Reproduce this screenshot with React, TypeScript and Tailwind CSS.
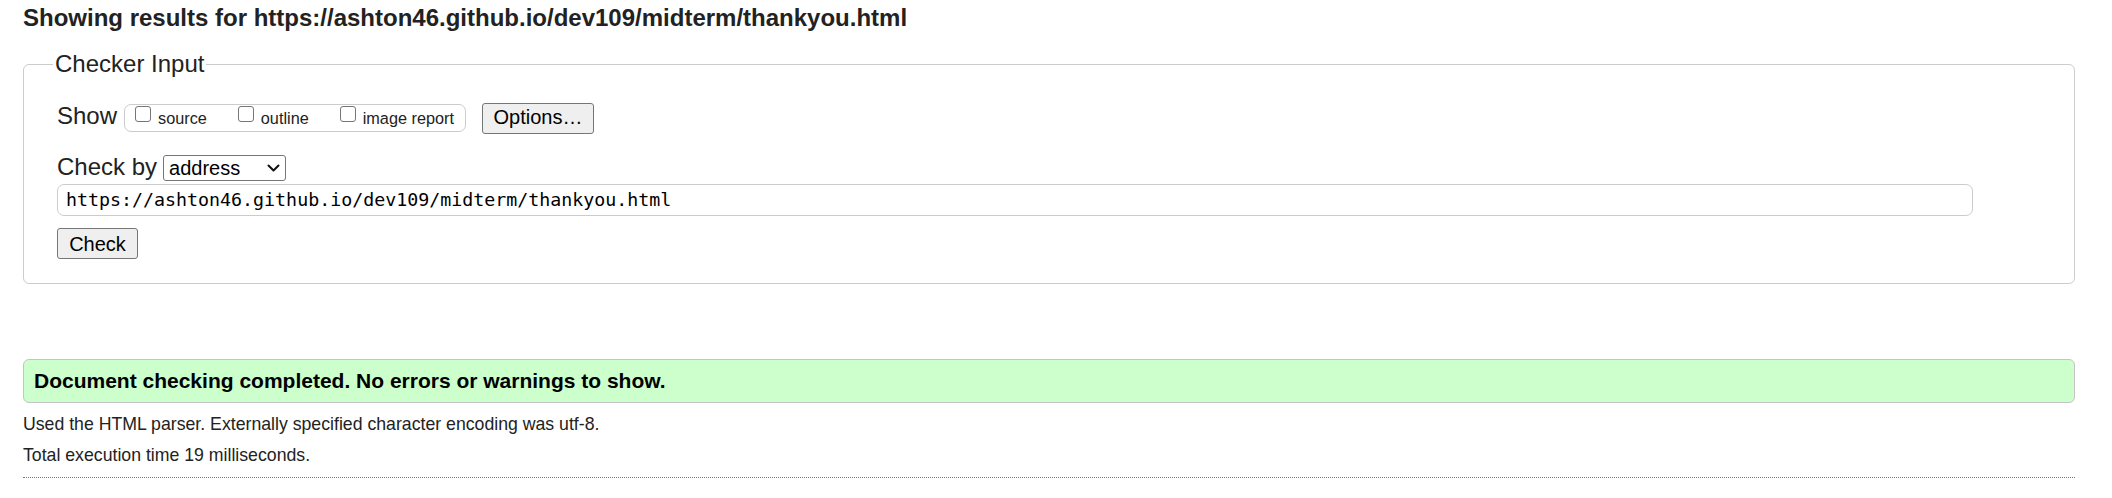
import React from "react";

function Box({ label, first }: { label: string; first?: boolean }) {
  return (
    <label className={first ? "flex items-start" : "ml-[31px] flex items-start"}>
      <span className="mt-[1px] h-[16px] w-[16px] rounded-[3px] border border-[#767676] bg-white" />
      <span className="ml-[7px] mt-[4px] text-[16.25px] leading-[18px]">{label}</span>
    </label>
  );
}

export default function App() {
  return (
    <div className="min-h-[498px] bg-white pl-[23px] pr-[37px] text-[#222] [font-family:'Liberation_Sans',Arial,sans-serif]">
      <h2 className="pt-[4px] text-[24px] leading-[28px] font-bold">
        Showing results for https://ashton46.github.io/dev109/midterm/thankyou.html
      </h2>

      <fieldset className="mt-[18px] rounded-[6px] border border-[#ccc]">
        <legend className="ml-[29px] px-[2px] text-[24px] leading-[28px]">Checker Input</legend>
        <div className="pl-[33px] pr-[101px] pb-[24px]">
          <div className="mt-[24px] flex items-start">
            <span className="text-[24px] leading-[28px]">Show</span>
            <div className="ml-[7px] mt-[2px] flex h-[28px] items-start rounded-[7px] border border-[#ccc] pl-[10px] pr-[11px]">
              <Box label="source" first />
              <Box label="outline" />
              <Box label="image report" />
            </div>
            <button className="ml-[16px] mt-[1px] flex h-[31px] w-[112px] items-center justify-center rounded-[3px] border border-[#767676] bg-[#efefef] pb-[3px] text-[20px] leading-[22px] text-black">
              Options…
            </button>
          </div>

          <div className="mt-[19px] flex items-start">
            <span className="text-[24px] leading-[28px]">Check by</span>
            <div className="ml-[6px] mt-[2px] flex h-[26px] w-[123px] items-center rounded-[3px] border border-[#767676] bg-white pl-[5px] pr-[5px]">
              <span className="text-[20px] leading-[22px] text-black">address</span>
              <svg className="ml-auto" width="13" height="8" viewBox="0 0 13 8" fill="none">
                <path d="M1.5 1.5 L6.5 6.5 L11.5 1.5" stroke="#111" strokeWidth="2" strokeLinecap="round" strokeLinejoin="round" />
              </svg>
            </div>
          </div>

          <div className="mt-[3px] flex h-[32px] w-full items-center rounded-[7px] border border-[#ccc] pl-[8px]">
            <span className="text-[18.3px] leading-[22px] text-black [font-family:'DejaVu_Sans_Mono',monospace]">
              https://ashton46.github.io/dev109/midterm/thankyou.html
            </span>
          </div>

          <button className="mt-[12px] flex h-[31px] w-[81px] items-center justify-center rounded-[3px] border border-[#767676] bg-[#efefef] text-[20px] leading-[22px] text-black">
            Check
          </button>
        </div>
      </fieldset>

      <div className="mt-[75px] flex h-[44px] items-center rounded-[6px] border border-[#c4c4c4] bg-[#ccffcc] pl-[10px]">
        <span className="text-[21px] leading-[24px] font-bold text-black">
          Document checking completed. No errors or warnings to show.
        </span>
      </div>

      <p className="mt-[10px] text-[17.7px] leading-[22px]">
        Used the HTML parser. Externally specified character encoding was utf-8.
      </p>
      <p className="mt-[9px] text-[17.7px] leading-[22px]">Total execution time 19 milliseconds.</p>
      <hr className="mt-[11px] border-0 border-t border-dotted border-[#777]" />
    </div>
  );
}
